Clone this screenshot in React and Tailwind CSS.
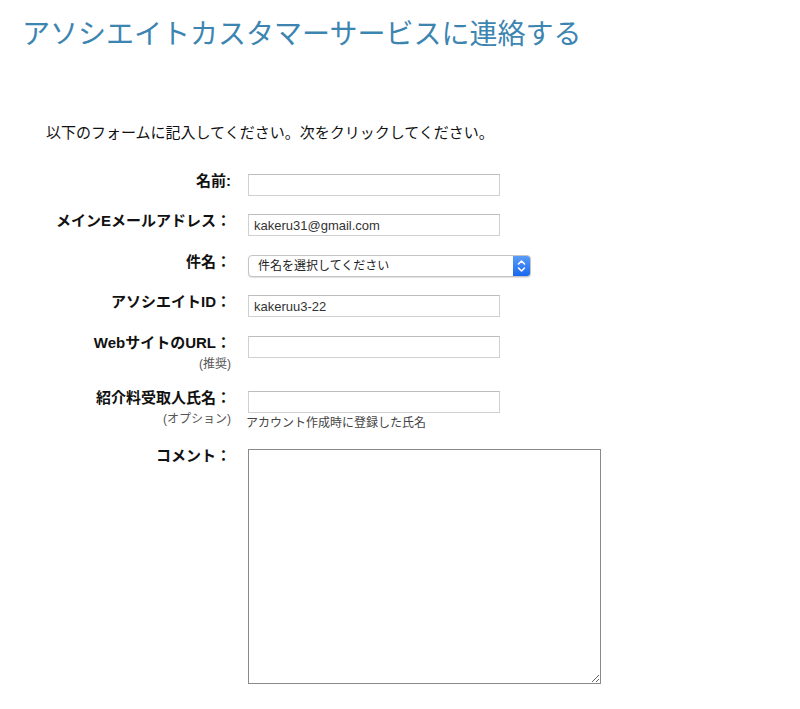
import React from 'react';

const font = { fontFamily: '"Liberation Sans", "Noto Sans CJK JP", sans-serif' };

const TextInput = ({ value = '' }) => (
  <input
    type="text"
    defaultValue={value}
    className="mt-[3px] h-[22px] w-[252px] border border-[#d0d0d0] border-t-[#bdbdbd] bg-white px-[5px] text-[13px] text-[#333] outline-none"
  />
);

const Label = ({ text, note }) => (
  <div className="w-[191px] shrink-0 text-right">
    <div className="text-[15px] font-bold leading-5 text-[#111]">{text}</div>
    {note && <div className="mt-[3px] text-[12px] leading-4 text-[#555]">{note}</div>}
  </div>
);

export default function App() {
  return (
    <div className="min-h-[709px] w-[800px] bg-white" style={font}>
      <h1 className="px-[22px] pt-[17px] text-[28px] font-normal leading-9 text-[#3d85b1]">
        アソシエイトカスタマーサービスに連絡する
      </h1>

      <p className="mt-[70px] pl-[46px] text-[15px] leading-5 text-[#111]">
        以下のフォームに記入してください。次をクリックしてください。
      </p>

      <form className="mt-[28px] flex flex-col pl-[40px]">
        {/* 名前 */}
        <div className="flex h-[40px] items-start gap-[17px]">
          <Label text="名前:" />
          <TextInput />
        </div>

        {/* メール */}
        <div className="flex h-[41px] items-start gap-[17px]">
          <Label text="メインEメールアドレス：" />
          <TextInput value="kakeru31@gmail.com" />
        </div>

        {/* 件名 */}
        <div className="flex h-[40px] items-start gap-[17px]">
          <Label text="件名：" />
          <div className="mt-[3px] flex h-[22px] w-[283px] items-stretch overflow-hidden rounded-[4px] border border-[#c4c4c4] bg-white shadow-[0_1px_1px_rgba(0,0,0,0.12)]">
            <span className="flex flex-1 items-center pl-[9px] text-[12px] text-[#222]">件名を選択してください</span>
            <span className="flex w-[17px] items-center justify-center bg-gradient-to-b from-[#5a9cf8] to-[#1767ee]">
              <svg width="9" height="14" viewBox="0 0 9 14" fill="none" stroke="white" strokeWidth="1.6" strokeLinecap="round" strokeLinejoin="round">
                <path d="M1.5 5 L4.5 2 L7.5 5" />
                <path d="M1.5 9 L4.5 12 L7.5 9" />
              </svg>
            </span>
          </div>
        </div>

        {/* ID */}
        <div className="flex h-[41px] items-start gap-[17px]">
          <Label text="アソシエイトID：" />
          <TextInput value="kakeruu3-22" />
        </div>

        {/* URL */}
        <div className="flex h-[55px] items-start gap-[17px]">
          <Label text="WebサイトのURL：" note="(推奨)" />
          <TextInput />
        </div>

        {/* 紹介料 */}
        <div className="flex h-[58px] items-start gap-[17px]">
          <Label text="紹介料受取人氏名：" note="(オプション)" />
          <div className="flex flex-col">
            <TextInput />
            <span className="ml-[-2px] mt-[2px] text-[12px] leading-4 text-[#444]">アカウント作成時に登録した氏名</span>
          </div>
        </div>

        {/* コメント */}
        <div className="flex items-start gap-[17px]">
          <Label text="コメント：" />
          <textarea className="mt-[3px] h-[235px] w-[353px] border border-[#8a8a8a] bg-white p-1 text-[13px] outline-none" />
        </div>
      </form>
    </div>
  );
}
